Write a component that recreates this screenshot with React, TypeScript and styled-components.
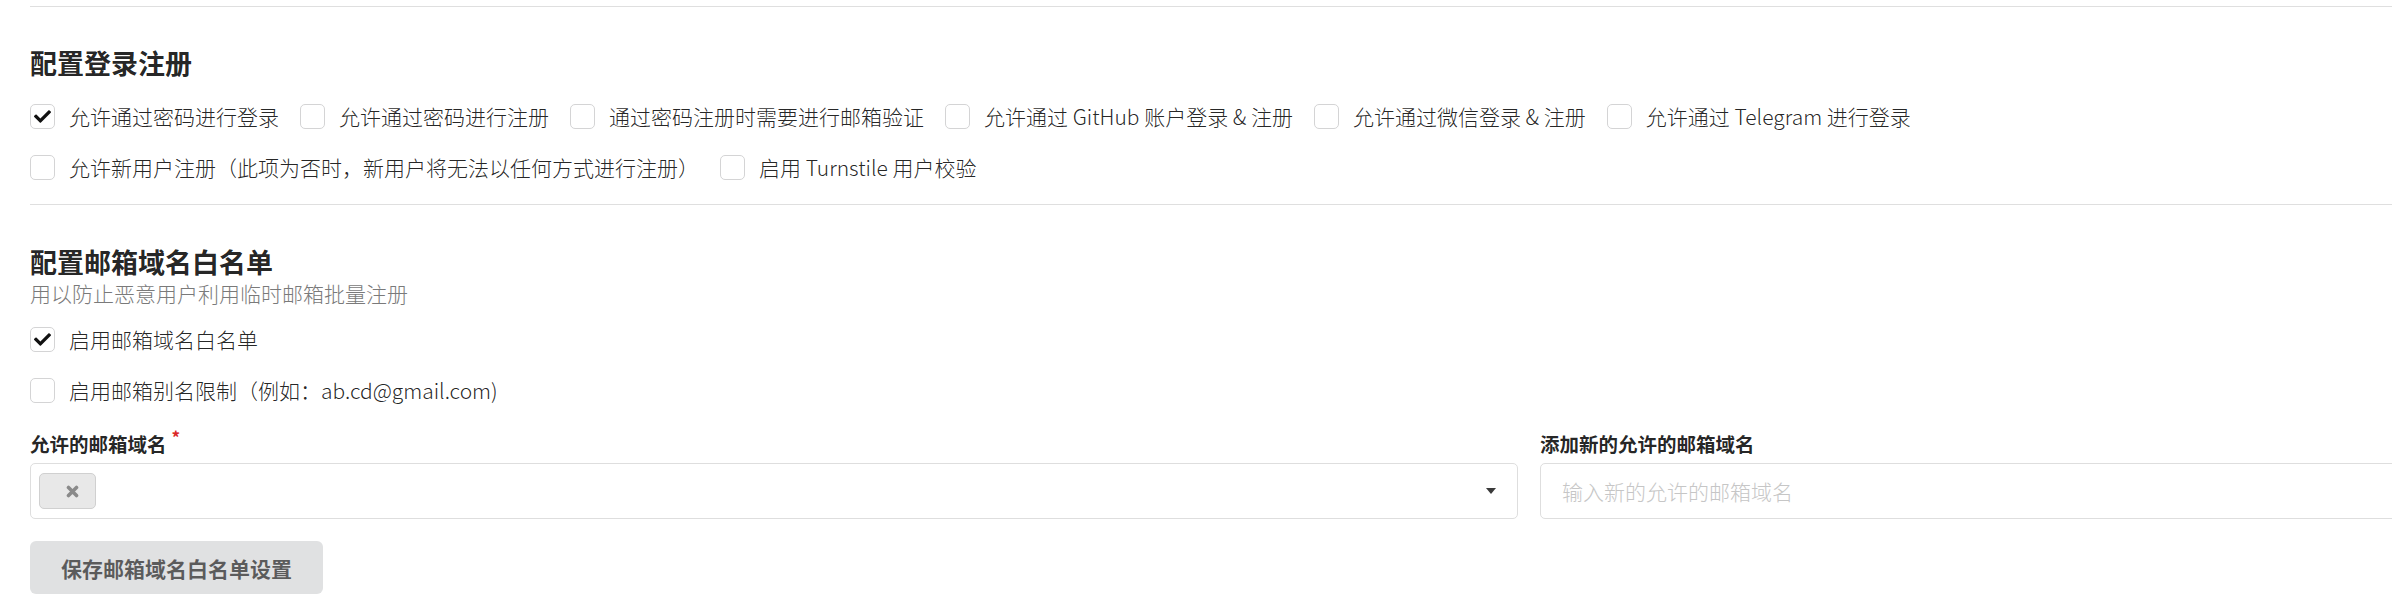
import React from "react";
import styled, { createGlobalStyle } from "styled-components";

const GlobalStyle = createGlobalStyle`
  html, body {
    margin: 0;
    padding: 0;
    overflow: hidden;
    background: #ffffff;
  }
  body {
    font-family: "Noto Sans CJK SC", "Noto Sans", sans-serif;
    color: rgba(0, 0, 0, 0.87);
  }
  * { box-sizing: border-box; }
`;

const Page = styled.div`
  width: 3058px;
  padding: 0 30px;
  display: flex;
  flex-direction: column;
`;

const Divider = styled.div<{ $top: number }>`
  margin-top: ${(p) => p.$top}px;
  height: 1px;
  background: #dfdfdf;
`;

const SectionTitle = styled.h3<{ $top: number }>`
  margin: ${(p) => p.$top}px 0 0;
  font-size: 27px;
  line-height: 34px;
  font-weight: 700;
  color: rgba(0, 0, 0, 0.87);
`;

const SubTitle = styled.div`
  font-size: 21px;
  line-height: 28px;
  font-weight: 300;
  color: #7a7a7a;
`;

const CheckRow = styled.div<{ $top: number }>`
  margin-top: ${(p) => p.$top}px;
  display: flex;
  align-items: center;
  column-gap: 21px;
`;

const CheckItem = styled.label`
  display: flex;
  align-items: center;
  gap: 14px;
  height: 25px;
  font-size: 21px;
  line-height: 25px;
  font-weight: 300;
  color: rgba(0, 0, 0, 0.87);
  white-space: nowrap;
  cursor: pointer;
`;

const Box = styled.span`
  width: 25px;
  height: 25px;
  flex: none;
  border: 1px solid #d4d4d5;
  border-radius: 5px;
  background: #fff;
  display: flex;
  align-items: center;
  justify-content: center;
`;

const CheckMark = () => (
  <svg width="17" height="17" viewBox="0 0 512 512" aria-hidden>
    <path
      fill="#111"
      d="M173.898 439.404l-166.4-166.4c-9.997-9.997-9.997-26.206 0-36.204l36.203-36.204c9.997-9.998 26.207-9.998 36.204 0L192 312.69 432.095 72.596c9.997-9.997 26.207-9.997 36.204 0l36.203 36.204c9.997 9.997 9.997 26.206 0 36.204l-294.4 294.401c-9.998 9.997-26.207 9.997-36.204-.001z"
    />
  </svg>
);

const Check = ({ checked, children }: { checked?: boolean; children: React.ReactNode }) => (
  <CheckItem>
    <Box>{checked && <CheckMark />}</Box>
    <span>{children}</span>
  </CheckItem>
);

const Fields = styled.div`
  margin-top: 31px;
  display: grid;
  grid-template-columns: 1fr 1fr;
  column-gap: 22px;
`;

const Field = styled.div`
  display: flex;
  flex-direction: column;
`;

const FieldLabel = styled.div`
  font-size: 19.5px;
  line-height: 20px;
  font-weight: 700;
  color: rgba(0, 0, 0, 0.87);
  margin-bottom: 9px;
  display: flex;
  align-items: flex-start;
`;

const Required = styled.span`
  color: #db2828;
  font-size: 17px;
  line-height: 14px;
  margin: -4px 0 0 5px;
`;

const Dropdown = styled.div`
  height: 56px;
  border: 1px solid #dedede;
  border-radius: 5px;
  background: #fff;
  display: flex;
  align-items: center;
  justify-content: space-between;
  padding: 0 21px 0 8px;
`;

const Chip = styled.span`
  width: 57px;
  height: 36px;
  background: #e8e8e8;
  border: 1px solid #d0d0d0;
  border-radius: 5px;
  display: flex;
  align-items: center;
  padding-left: 26px;
`;

const DeleteIcon = () => (
  <svg width="13" height="13" viewBox="0 0 13 13" aria-hidden>
    <path d="M2.5 2.5 L10.5 10.5 M10.5 2.5 L2.5 10.5" stroke="#8a8a8a" strokeWidth="3.6" strokeLinecap="round" />
  </svg>
);

const Caret = () => (
  <svg width="10" height="6" viewBox="0 0 10 6" aria-hidden>
    <path d="M0 0 H10 L5 6 Z" fill="#3a3a3a" />
  </svg>
);

const TextInput = styled.input`
  height: 56px;
  border: 1px solid #dedede;
  border-radius: 5px;
  padding: 0 21px;
  font-family: "Noto Sans CJK SC", "Noto Sans", sans-serif;
  font-size: 21px;
  font-weight: 300;
  color: rgba(0, 0, 0, 0.87);
  outline: none;
  &::placeholder {
    color: #c6c6c6;
  }
`;

const SaveButton = styled.button`
  margin-top: 22px;
  align-self: flex-start;
  height: 53px;
  padding: 0 31px;
  border: none;
  border-radius: 6px;
  background: #e0e1e2;
  color: rgba(0, 0, 0, 0.6);
  font-family: "Noto Sans CJK SC", "Noto Sans", sans-serif;
  font-size: 21px;
  font-weight: 700;
  cursor: pointer;
`;

export default function App() {
  return (
    <>
      <GlobalStyle />
      <Page>
        <Divider $top={6} />
        <SectionTitle $top={39}>配置登录注册</SectionTitle>
        <CheckRow $top={24}>
          <Check checked>允许通过密码进行登录</Check>
          <Check>允许通过密码进行注册</Check>
          <Check>通过密码注册时需要进行邮箱验证</Check>
          <Check>允许通过 GitHub 账户登录 &amp; 注册</Check>
          <Check>允许通过微信登录 &amp; 注册</Check>
          <Check>允许通过 Telegram 进行登录</Check>
        </CheckRow>
        <CheckRow $top={26}>
          <Check>允许新用户注册（此项为否时，新用户将无法以任何方式进行注册）</Check>
          <Check>启用 Turnstile 用户校验</Check>
        </CheckRow>
        <Divider $top={24} />
        <SectionTitle $top={40}>配置邮箱域名白名单</SectionTitle>
        <SubTitle>用以防止恶意用户利用临时邮箱批量注册</SubTitle>
        <CheckRow $top={20}>
          <Check checked>启用邮箱域名白名单</Check>
        </CheckRow>
        <CheckRow $top={26}>
          <Check>启用邮箱别名限制（例如：ab.cd@gmail.com)</Check>
        </CheckRow>
        <Fields>
          <Field>
            <FieldLabel>
              允许的邮箱域名<Required>*</Required>
            </FieldLabel>
            <Dropdown>
              <Chip>
                <DeleteIcon />
              </Chip>
              <Caret />
            </Dropdown>
          </Field>
          <Field>
            <FieldLabel>添加新的允许的邮箱域名</FieldLabel>
            <TextInput placeholder="输入新的允许的邮箱域名" />
          </Field>
        </Fields>
        <SaveButton>保存邮箱域名白名单设置</SaveButton>
      </Page>
    </>
  );
}
